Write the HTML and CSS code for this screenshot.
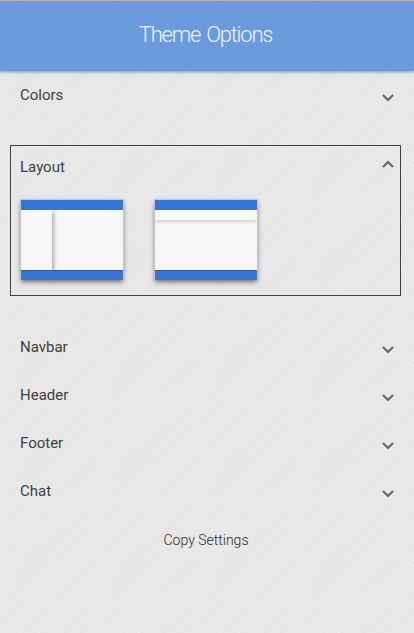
FILE: index.html
```html
<!DOCTYPE html>
<html lang="en">
<head>
<meta charset="utf-8">
<title>Theme Options</title>
<link rel="stylesheet" href="styles.css">
</head>
<body>
<div class="panel">
  <header class="title-bar"><h1>Theme Options</h1></header>
  <main class="sections">
    <section class="section first"><h2>Colors</h2><svg class="chevron" viewBox="0 0 12 8"><path d="M1 1 6 6l5-5"/></svg></section>
    <section class="expanded">
      <div class="section-head"><h2>Layout</h2><svg class="chevron" viewBox="0 0 12 8"><path d="M1 7 6 2l5 5"/></svg></div>
      <div class="choices">
        <div class="thumb"><div class="bar"></div><div class="body"><div class="side"></div></div><div class="bar foot"></div></div>
        <div class="thumb"><div class="bar"></div><div class="body"><div class="strip"></div></div><div class="bar foot"></div></div>
      </div>
    </section>
    <section class="section"><h2>Navbar</h2><svg class="chevron" viewBox="0 0 12 8"><path d="M1 1 6 6l5-5"/></svg></section>
    <section class="section"><h2>Header</h2><svg class="chevron" viewBox="0 0 12 8"><path d="M1 1 6 6l5-5"/></svg></section>
    <section class="section"><h2>Footer</h2><svg class="chevron" viewBox="0 0 12 8"><path d="M1 1 6 6l5-5"/></svg></section>
    <section class="section"><h2>Chat</h2><svg class="chevron" viewBox="0 0 12 8"><path d="M1 1 6 6l5-5"/></svg></section>
    <div class="copy">Copy Settings</div>
  </main>
  <svg class="texture" width="414" height="633" aria-hidden="true">
    <defs>
      <pattern id="brushed" width="100" height="100" patternUnits="userSpaceOnUse">
        <g fill="none" stroke-width="1.2">
          <path stroke="#fff" stroke-opacity=".22" d="M2 70 67 5"/>
          <path stroke="#fff" stroke-opacity=".12" d="M35 97 93 39M12 42 40 14M48 30 72 6"/>
          <path stroke="#777" stroke-opacity=".03" d="M4 70 66 8M37 97 80 54M10 98 48 60M52 62 88 26M4 22 22 4M72 84 96 60M22 66 40 48"/>
          <path stroke="#777" stroke-opacity=".02" d="M15 82 70 27M58 96 95 59M8 48 46 10M62 36 90 8"/>
        </g>
      </pattern>
    </defs>
    <rect width="414" height="633" fill="url(#brushed)"/>
  </svg>
</div>
</body>
</html>
```
FILE: styles.css
```css
* { box-sizing: border-box; }
body {
  margin: 0;
  background: #e8e8e8;
  color: #404040;
  font-family: Roboto, "Liberation Sans", sans-serif;
}
.panel {
  position: relative;
  isolation: isolate;
  height: 633px;
  overflow: hidden;
}
.texture { position: absolute; inset: 0; z-index: -1; }
.title-bar {
  height: 71px;
  border-top: 1px solid #b2b2b2;
  background: rgba(89, 143, 219, .88);
  box-shadow: 0 1px 3px rgba(0, 0, 0, .38);
  display: flex;
  justify-content: center;
  align-items: center;
}
h1 {
  margin: 0;
  padding: 0 3px 2px 0;
  color: #f0f4fb;
  font-size: 22px;
  font-weight: 300;
  line-height: 26px;
  letter-spacing: -1.25px;
  word-spacing: 2px;
}
h2 { margin: 0; font-size: 15px; font-weight: 400; line-height: 20px; }
.section {
  height: 48px;
  padding: 0 20px;
  display: flex;
  justify-content: space-between;
  align-items: center;
}
.first { margin-bottom: 26px; }
.chevron {
  width: 12px;
  height: 8px;
  fill: none;
  stroke: #666;
  stroke-width: 2.1;
}
.section .chevron { margin-top: 6px; }
.expanded {
  height: 151px;
  margin: 0 13px 27px 10px;
  padding: 11px 6px 0 9px;
  border: 1px solid #444;
}
.section-head { display: flex; justify-content: space-between; height: 20px; }
.section-head .chevron { margin-top: 3px; }
.choices { display: flex; gap: 32px; margin: 23px 0 0 1px; }
.thumb {
  width: 102px;
  height: 80px;
  display: flex;
  flex-direction: column;
  background: #f7f7f7;
  box-shadow: 1px -1px 0 #c8c8c8, -1px -1px 0 #c0c0c0, 0 2px 5px rgba(0, 0, 0, .55);
}
.bar { height: 10px; background: #3575d5; }
.foot { border-top: 1px solid #2a5da9; }
.body { flex: 1; overflow: hidden; }
.side { width: 31px; height: 60px; background: #f7f7f7; box-shadow: 1px 2px 5px rgba(0, 0, 0, .42); }
.strip { height: 10px; background: #f7f7f7; box-shadow: 0 1px 4px rgba(0, 0, 0, .22); }
.copy {
  margin-top: 15px;
  padding-right: 2px;
  text-align: center;
  color: #2c2c2c;
  font-size: 14px;
  font-weight: 300;
  line-height: 20px;
}
```
